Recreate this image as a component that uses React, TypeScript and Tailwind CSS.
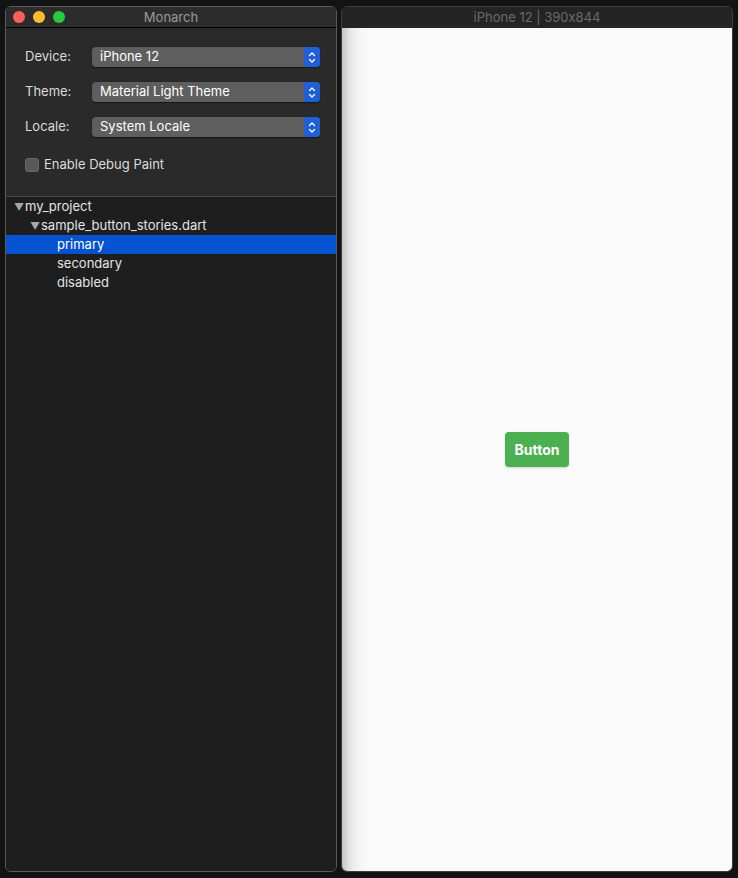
import React from 'react'

const font = {
  fontFamily: 'Inter, "Noto Sans", "Liberation Sans", sans-serif',
  fontFeatureSettings: '"calt" 0',
}

function Stepper() {
  return (
    <div className="w-[16px] h-full bg-[#1f5fd8] rounded-r-[4px] flex items-center justify-center">
      <svg width="8" height="13" viewBox="0 0 8 13" fill="none" stroke="white" strokeWidth="1.4" strokeLinecap="round" strokeLinejoin="round">
        <path d="M1.5 4.5 L4 2 L6.5 4.5" />
        <path d="M1.5 8.5 L4 11 L6.5 8.5" />
      </svg>
    </div>
  )
}

function SelectRow({ label, value }: { label: string; value: string }) {
  return (
    <div className="flex items-center h-[20px]">
      <span className="w-[67px] text-[13px] text-[#dcdcdc]">{label}</span>
      <div className="flex items-stretch w-[228px] h-[20px] rounded-[4px] bg-[#5e5e5e] shadow-[0_0.5px_1px_rgba(0,0,0,0.5)]">
        <div className="flex-1 flex items-center pl-[8px] text-[13px] text-white">{value}</div>
        <Stepper />
      </div>
    </div>
  )
}

function TreeRow({ depth, label, open }: { depth: number; label: string; open?: boolean }) {
  return (
    <div className="flex items-center h-[19px] text-[13px] text-[#e4e4e4]" style={{ paddingLeft: 8 + depth * 16 }}>
      {open && <span className="w-[11px] text-[10px] text-[#a8a8a8] leading-none">▼</span>}
      <span>{label}</span>
    </div>
  )
}

export default function App() {
  return (
    <div className="w-[738px] h-[878px] bg-[#131313] flex gap-[4px] pl-[5px] pt-[6px]" style={font}>
      {/* Left: Monarch window */}
      <div className="w-[332px] h-[866px] rounded-[6px] border border-[#5a5a5a] flex flex-col overflow-hidden">
        <div className="h-[21px] bg-[#2c2c2c] border-b border-black flex items-center pl-[7px] pr-[7px] shrink-0">
          <div className="flex items-center gap-[8px] w-[52px]">
            <div className="w-[12px] h-[12px] rounded-full bg-[#fe5f57]" />
            <div className="w-[12px] h-[12px] rounded-full bg-[#febc2e]" />
            <div className="w-[12px] h-[12px] rounded-full bg-[#28c840]" />
          </div>
          <div className="flex-1 text-center text-[13px] text-[#9b9b9b] pt-[1px]">Monarch</div>
          <div className="w-[52px]" />
        </div>

        <div className="h-[169px] bg-[#2a2a2a] border-b border-[#474747] pl-[19px] pt-[19px] flex flex-col gap-[15px] shrink-0">
          <SelectRow label="Device:" value="iPhone 12" />
          <SelectRow label="Theme:" value="Material Light Theme" />
          <SelectRow label="Locale:" value="System Locale" />
          <div className="flex items-center gap-[5px] mt-[3px]">
            <div className="w-[14px] h-[14px] rounded-[3px] bg-[#595959] border border-[#666]" />
            <span className="text-[13px] text-[#dcdcdc]">Enable Debug Paint</span>
          </div>
        </div>

        <div className="flex-1 bg-[#1e1e1e]">
          <TreeRow depth={0} label="my_project" open />
          <TreeRow depth={1} label="sample_button_stories.dart" open />
          <div className="flex items-center h-[19px] text-[13px] text-white bg-[#0553d1] pl-[51px]">primary</div>
          <div className="flex items-center h-[19px] text-[13px] text-[#e4e4e4] pl-[51px]">secondary</div>
          <div className="flex items-center h-[19px] text-[13px] text-[#e4e4e4] pl-[51px]">disabled</div>
        </div>
      </div>

      {/* Right: device preview window */}
      <div className="w-[392px] h-[866px] rounded-[6px] border border-[#3d3d3d] flex flex-col overflow-hidden">
        <div className="h-[21px] bg-[#242424] flex items-center justify-center text-[13px] text-[#6b6b6b] pt-[1px] shrink-0">
          iPhone 12 | 390x844
        </div>
        <div className="flex-1 flex items-center justify-center bg-[linear-gradient(to_right,#c4c4c4,#e6e6e6_8px,#f5f5f5_18px,#fafafa_30px)]">
          <button className="h-[35px] px-[10px] rounded-[4px] bg-[#4caf50] text-white text-[14px] font-bold shadow-[0_1px_2px_rgba(0,0,0,0.15)]">
            Button
          </button>
        </div>
      </div>
    </div>
  )
}
